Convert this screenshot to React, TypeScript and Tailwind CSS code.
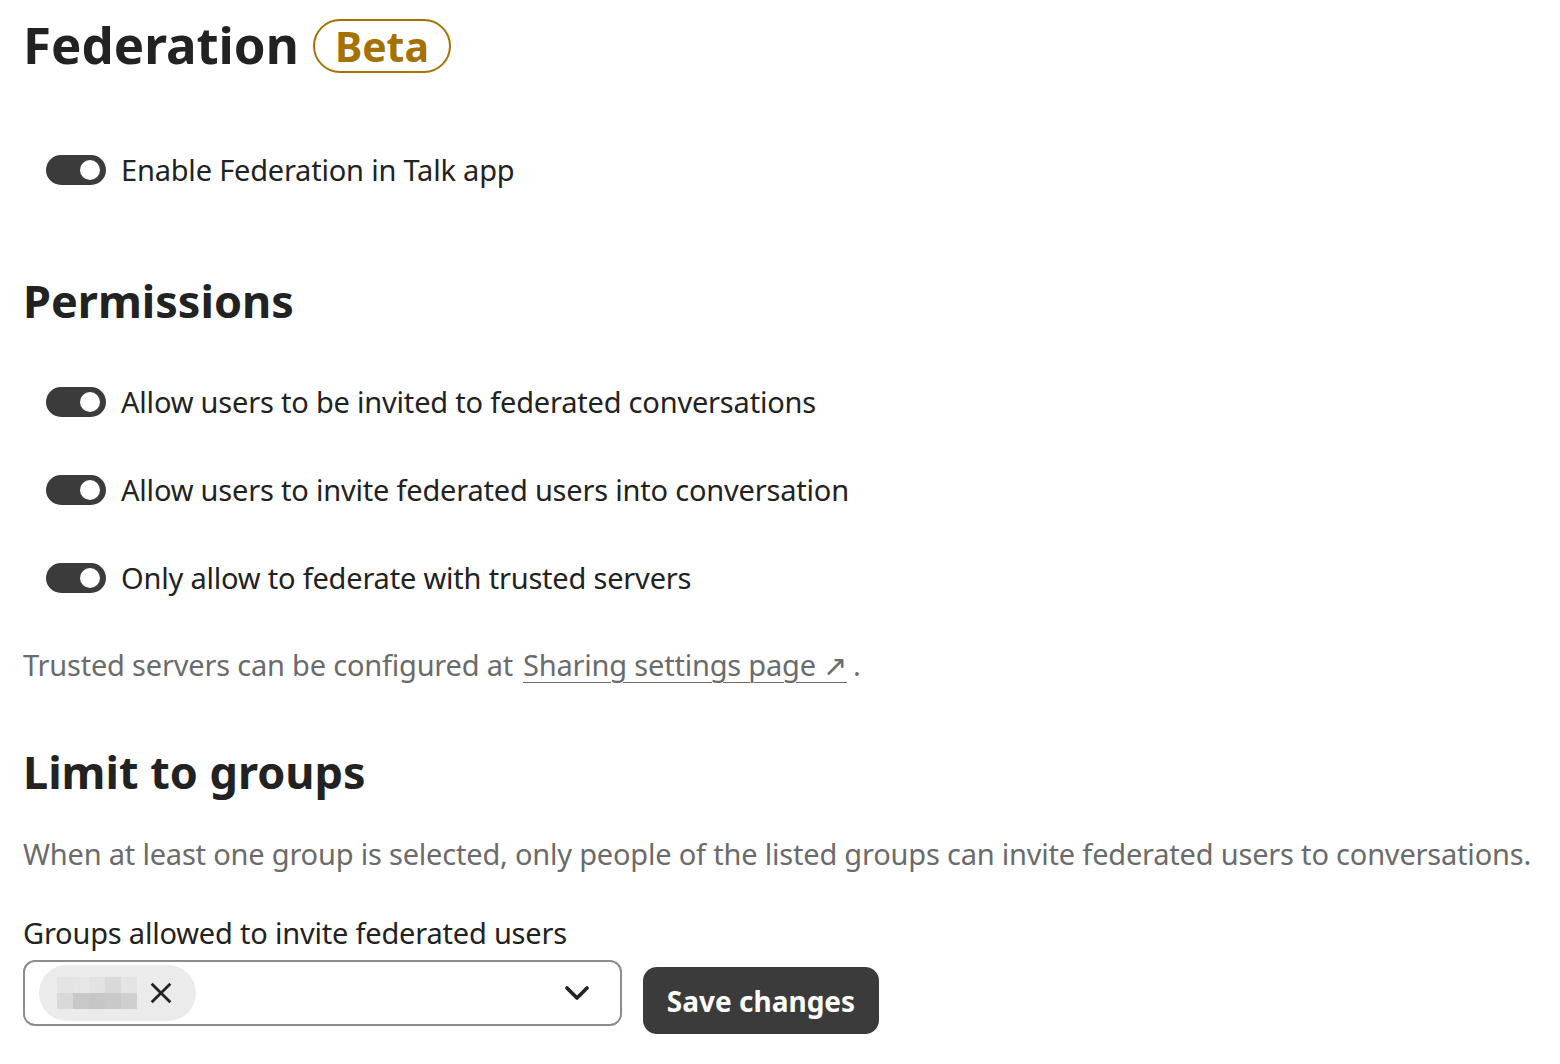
import React from "react";

function Toggle() {
  return (
    <div className="relative w-[60px] h-[30px] rounded-full bg-[#3b3b3b] shrink-0">
      <div className="absolute right-[6px] top-[5px] w-[20px] h-[20px] rounded-full bg-white" />
    </div>
  );
}

function Row({ label }: { label: string }) {
  return (
    <div className="flex items-center gap-[15px] pl-[23px] h-[44px]">
      <Toggle />
      <span className="text-[29px] tracking-[-0.2px] text-[#222222] leading-none whitespace-nowrap -mt-[2px]">{label}</span>
    </div>
  );
}

export default function App() {
  return (
    <div
      className="min-h-screen bg-white text-[#222222] pl-[23px]"
      style={{ fontFamily: '"Noto Sans", "Open Sans", sans-serif' }}
    >
      <div className="flex items-center gap-[14px] mt-[18px] h-[56px]">
        <h2 className="text-[51px] font-bold leading-none -mt-[4px]">Federation</h2>
        <span className="h-[54px] px-[20px] flex items-center rounded-full border-2 border-[#a37200] text-[#a37200] text-[41px] font-bold leading-none">
          Beta
        </span>
      </div>

      <div className="mt-[74px]">
        <Row label="Enable Federation in Talk app" />
      </div>

      <h3 className="mt-[83px] h-[50px] flex items-center text-[45px] font-bold leading-none -mt-[2px]">Permissions</h3>

      <div className="mt-[55px] flex flex-col gap-[44px]">
        <Row label="Allow users to be invited to federated conversations" />
        <Row label="Allow users to invite federated users into conversation" />
        <Row label="Only allow to federate with trusted servers" />
      </div>

      <p className="mt-[44px] h-[40px] flex items-center text-[29px] tracking-[-0.2px] text-[#6b6b6b] leading-none whitespace-nowrap">
        <span>Trusted servers can be configured at</span>
        <a className="ml-[10px] underline underline-offset-[6px] decoration-1 text-[#6b6b6b]" href="#">
          Sharing settings page ↗
        </a>
        <span className="ml-[6px]">.</span>
      </p>

      <h3 className="mt-[62px] h-[50px] flex items-center text-[45px] font-bold leading-none">Limit to groups</h3>

      <p className="mt-[37px] h-[40px] flex items-center text-[29px] tracking-[-0.2px] text-[#6b6b6b] leading-none whitespace-nowrap">
        When at least one group is selected, only people of the listed groups can invite federated users to conversations.
      </p>

      <p className="mt-[39px] h-[40px] flex items-center text-[29px] tracking-[-0.2px] text-[#222222] leading-none whitespace-nowrap">
        Groups allowed to invite federated users
      </p>

      <div className="mt-[8px] flex items-start gap-[21px]">
        <div className="w-[599px] h-[66px] rounded-[12px] border-2 border-[#8c8c8c] flex items-center pl-[14px] pr-[28px] justify-between">
          <div className="h-[56px] w-[157px] rounded-full bg-[#ebebeb] flex items-center pl-[18px] gap-[10px]">
            <div className="grid grid-cols-5 grid-rows-2 w-[80px] h-[32px]">
              <div className="bg-[#e4e4e4]" />
              <div className="bg-[#e6e6e6]" />
              <div className="bg-[#e2e2e2]" />
              <div className="bg-[#d9d9d9]" />
              <div className="bg-[#e4e4e4]" />
              <div className="bg-[#d9d9d9]" />
              <div className="bg-[#c8c8c8]" />
              <div className="bg-[#c6c6c6]" />
              <div className="bg-[#c9c9c9]" />
              <div className="bg-[#cfcfcf]" />
            </div>
            <svg width="28" height="28" viewBox="0 0 24 24" fill="none" stroke="#222" strokeWidth="2.4">
              <path d="M4 4 L20 20 M20 4 L4 20" />
            </svg>
          </div>
          <svg width="30" height="30" viewBox="0 0 24 24" fill="none" stroke="#222" strokeWidth="3" strokeLinecap="round" strokeLinejoin="round">
            <path d="M4 8 L12 16 L20 8" />
          </svg>
        </div>
        <button className="mt-[7px] h-[67px] w-[236px] rounded-[14px] bg-[#3b3b3b] text-white text-[28px] font-bold leading-none flex items-center justify-center">
          Save changes
        </button>
      </div>
    </div>
  );
}
